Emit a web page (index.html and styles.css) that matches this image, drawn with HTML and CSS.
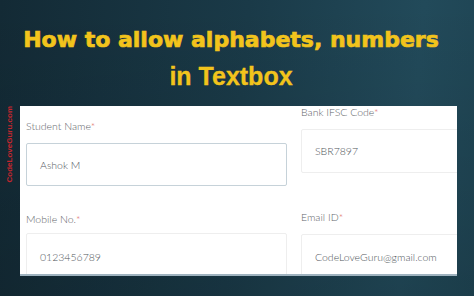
FILE: index.html
```html
<!DOCTYPE html>
<html>
<head>
<meta charset="utf-8">
<link rel="stylesheet" href="styles.css">
</head>
<body>
<div class="page">
  <header class="title">
    <div class="line1">How to allow alphabets, numbers</div>
    <div class="line2">in Textbox</div>
  </header>
  <main class="row">
    <aside class="side"><span class="brand">CodeLoveGuru.com</span></aside>
    <section class="card">
      <div class="col col-left">
        <label class="lbl">Student Name<span class="req">*</span></label>
        <div class="field field-focus field-a">Ashok M</div>
        <label class="lbl lbl-mobile">Mobile No.<span class="req">*</span></label>
        <div class="field field-b">0123456789</div>
      </div>
      <div class="col col-right">
        <label class="lbl">Bank IFSC Code<span class="req">*</span></label>
        <div class="field field-c">SBR7897</div>
        <label class="lbl lbl-email">Email ID<span class="req">*</span></label>
        <div class="field field-d">CodeLoveGuru@gmail.com</div>
      </div>
    </section>
  </main>
</div>
</body>
</html>
```

FILE: styles.css
```css
html, body {
  margin: 0;
  padding: 0;
}
body {
  width: 474px;
  height: 296px;
  overflow: hidden;
  background:
    linear-gradient(180deg, rgba(0,0,0,0) 0%, rgba(0,0,0,0.12) 100%),
    linear-gradient(95deg, #132a35 0%, #1a3a48 50%, #224a5a 85%, #1f4554 100%);
}
.page {
  width: 474px;
  height: 296px;
  display: flex;
  flex-direction: column;
}
.title {
  padding-top: 25px;
  padding-right: 12px;
  text-align: center;
  color: #f2c41c;
  font-weight: bold;
}
.line1 {
  font-family: "DejaVu Sans", sans-serif;
  font-size: 22px;
  line-height: 30px;
  -webkit-text-stroke: 0.7px #f2c41c;
}
.line2 {
  font-family: "Liberation Sans", Arial, sans-serif;
  font-size: 25px;
  line-height: 42px;
  -webkit-text-stroke: 0.3px #f2c41c;
}
.row {
  margin-top: 9px;
  display: flex;
  align-items: flex-start;
}
.side {
  width: 20px;
  flex: none;
  display: flex;
  justify-content: center;
  padding-top: 0;
}
.brand {
  writing-mode: vertical-rl;
  transform: rotate(180deg);
  font-family: "Liberation Sans", Arial, sans-serif;
  font-weight: bold;
  font-size: 8px;
  line-height: 9px;
  color: #c4262e;
  margin-left: -2px;
}
.card {
  width: 437px;
  height: 170px;
  flex: none;
  background: #ffffff;
  border-bottom: 2px solid #9fb3bf;
  overflow: hidden;
  display: flex;
  gap: 14px;
  padding-left: 6px;
  box-sizing: border-box;
}
.col {
  display: flex;
  flex-direction: column;
  flex: none;
}
.col-left {
  width: 261px;
  padding-top: 14px;
}
.col-right {
  width: 300px;
  padding-top: 0;
}
.lbl {
  font-family: Lato, "Open Sans", sans-serif;
  font-weight: 300;
  font-size: 10.5px;
  line-height: 12px;
  color: #5f656a;
  height: 12px;
}
.req {
  color: #d9534f;
}
.field {
  box-sizing: border-box;
  border: 1px solid #eeeeee;
  border-radius: 2px;
  padding-left: 13px;
  display: flex;
  align-items: center;
  font-family: Lato, "Open Sans", sans-serif;
  font-weight: 300;
  font-size: 10.5px;
  color: #50565b;
  flex: none;
}
.field-focus {
  border-color: #c6d2d9;
}
.field-a {
  margin-top: 11px;
  height: 43px;
}
.lbl-mobile {
  margin-top: 27px;
}
.field-b {
  margin-top: 8px;
  height: 46px;
  align-items: flex-start;
  padding-top: 17px;
}
.field-c {
  margin-top: 11px;
  height: 44px;
}
.lbl-email {
  margin-top: 38px;
}
.field-d {
  margin-top: 11px;
  height: 46px;
  align-items: flex-start;
  padding-top: 16px;
}
```
